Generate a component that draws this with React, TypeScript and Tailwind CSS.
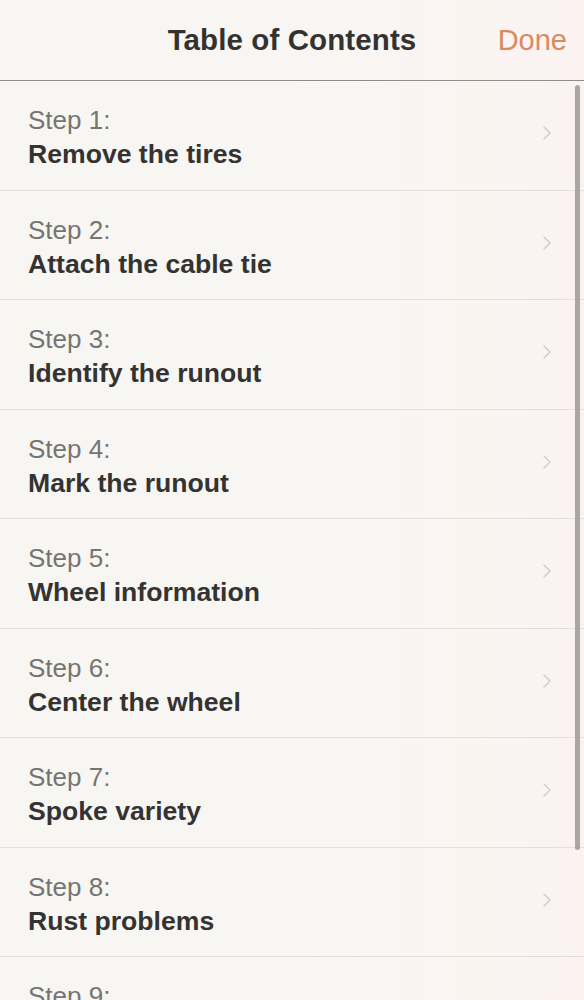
import React from 'react';

const steps = [
  'Remove the tires',
  'Attach the cable tie',
  'Identify the runout',
  'Mark the runout',
  'Wheel information',
  'Center the wheel',
  'Spoke variety',
  'Rust problems',
  'True the wheel',
];

const Chevron: React.FC = () => (
  <svg width="10" height="16" viewBox="0 0 10 16" className="shrink-0">
    <polyline points="2,2 8,8 2,14" fill="none" stroke="#d3cfcd" strokeWidth="1.6" strokeLinecap="round" strokeLinejoin="round" />
  </svg>
);

const App: React.FC = () => {
  return (
    <div
      className="relative h-[1000px] w-[584px] overflow-hidden bg-gradient-to-r from-[#f7f6f2] via-[#f8f6f3] to-[#fcf3f1] text-[#333]"
      style={{ fontFamily: '"Liberation Sans", Arial, sans-serif' }}
    >
      {/* Header */}
      <div className="relative flex h-[81px] items-center justify-center border-b border-[#8f8d8b]">
        <h1 className="text-[29.5px] font-bold tracking-[0.1px] text-[#333231]">Table of Contents</h1>
        <button className="absolute right-[17px] top-[19px] text-[29px] leading-[42px] text-[#d98a5f]">Done</button>
      </div>

      {/* Steps */}
      <ul>
        {steps.map((title, i) => (
          <li
            key={i}
            className="flex h-[109.5px] items-center justify-between border-b border-[#e3dfdc] pl-7 pr-[32px]"
          >
            <div className="pt-[4px]">
              <div className="text-[26px] leading-[34px] text-[#767473]">Step {i + 1}:</div>
              <div className="text-[26.6px] font-bold leading-[34px] text-[#343332]">{title}</div>
            </div>
            <div className="-mt-[4px]">
              <Chevron />
            </div>
          </li>
        ))}
      </ul>

      {/* Scroll indicator */}
      <div className="absolute right-[4px] top-[85px] h-[765px] w-[5px] rounded-full bg-[#a9a6a5]" />
    </div>
  );
};

export default App;
